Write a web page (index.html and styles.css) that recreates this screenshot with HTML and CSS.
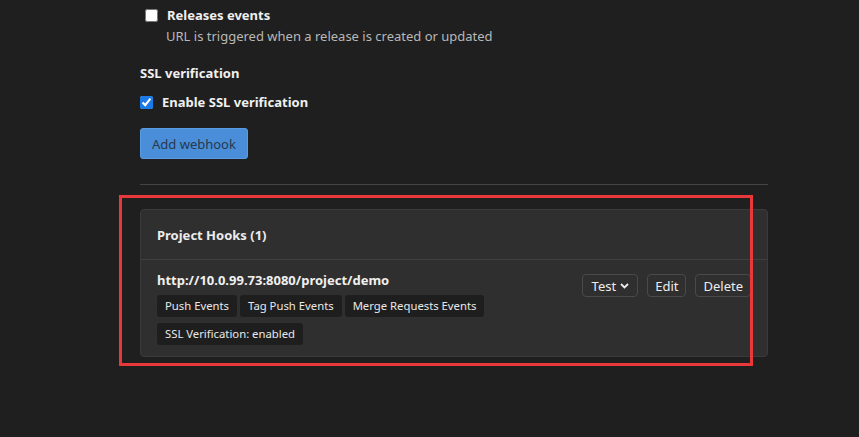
FILE: index.html
```html
<!DOCTYPE html>
<html>
<head>
<meta charset="utf-8">
<link rel="stylesheet" href="styles.css">
</head>
<body>
<div class="page">
  <div class="form">
    <label class="check sub">
      <input type="checkbox">
      <span class="check-label">Releases events</span>
    </label>
    <p class="help">URL is triggered when a release is created or updated</p>

    <div class="section-title">SSL verification</div>
    <label class="check">
      <input type="checkbox" checked>
      <span class="check-label">Enable SSL verification</span>
    </label>

    <button class="btn-primary">Add webhook</button>
  </div>

  <hr class="divider">

  <div class="panel">
    <div class="panel-head">Project Hooks (1)</div>
    <div class="panel-body">
      <div class="hook-info">
        <div class="hook-url">http://10.0.99.73:8080/project/demo</div>
        <div class="badges">
          <span class="badge">Push Events</span>
          <span class="badge">Tag Push Events</span>
          <span class="badge">Merge Requests Events</span>
        </div>
        <div class="badges">
          <span class="badge">SSL Verification: enabled</span>
        </div>
      </div>
      <div class="actions">
        <button class="btn btn-test">Test <svg class="caret" width="9" height="6" viewBox="0 0 9 6"><path d="M1 1l3.5 3.5L8 1" fill="none" stroke="currentColor" stroke-width="1.8"/></svg></button>
        <button class="btn">Edit</button>
        <button class="btn btn-delete">Delete</button>
      </div>
    </div>
  </div>

  <div class="highlight"></div>
</div>
</body>
</html>
```
FILE: styles.css
```css
html, body {
  margin: 0;
  padding: 0;
  background: #1f1f1f;
}
body {
  font-family: "Noto Sans", "Open Sans", sans-serif;
  font-size: 13px;
  color: #e6e6e6;
  width: 859px;
  height: 437px;
  overflow: hidden;
}
.page {
  position: relative;
  padding: 5px 0 0 140px;
  width: 628px;
}
.form {
  display: flex;
  flex-direction: column;
  align-items: flex-start;
}
.check {
  display: flex;
  align-items: center;
  height: 20px;
  line-height: 20px;
}
.check input {
  margin: 0;
  width: 13px;
  height: 13px;
  accent-color: #1c7ae8;
}
.check-label {
  font-weight: 700;
  color: #f0f0f0;
  margin-left: 9px;
}
.check.sub {
  padding-left: 5px;
}
.help {
  margin: 1px 0 0 26px;
  line-height: 20px;
  color: #b8b8b8;
}
.section-title {
  margin-top: 17px;
  line-height: 20px;
  font-weight: 700;
  color: #f0f0f0;
}
.section-title + .check {
  margin-top: 9px;
}
.btn-primary {
  margin-top: 16px;
  height: 31px;
  padding: 0 11px;
  font: inherit;
  color: #27384c;
  background: #4a8ed9;
  border: 1px solid #5b9be2;
  border-radius: 3px;
}
.divider {
  margin: 25px 0 0 0;
  border: 0;
  border-top: 1px solid #444;
  height: 0;
}
.panel {
  margin-top: 24px;
  background: #2f2f2f;
  border: 1px solid #3a3a3a;
  border-radius: 4px;
}
.panel-head {
  height: 50px;
  padding: 0 16px;
  display: flex;
  align-items: center;
  box-sizing: border-box;
  border-bottom: 1px solid #3f3f3f;
  font-weight: 700;
  color: #ececec;
}
.panel-body {
  display: flex;
  justify-content: space-between;
  padding: 10px 16px 11px 16px;
}
.hook-url {
  line-height: 20px;
  font-weight: 700;
  color: #f0f0f0;
}
.badges {
  display: flex;
  gap: 3px;
  margin-top: 6px;
}
.hook-url + .badges {
  margin-top: 5px;
}
.badge {
  height: 22px;
  line-height: 22px;
  padding: 0 8px;
  font-size: 11.3px;
  background: #1e1e1e;
  color: #e8e8e8;
  border-radius: 3px;
}
.actions {
  display: flex;
  gap: 9px;
  margin-top: 4px;
  align-items: flex-start;
}
.btn {
  height: 23px;
  padding: 0 7px;
  font: inherit;
  color: #ececec;
  background: transparent;
  border: 1px solid #4a4a4a;
  border-radius: 4px;
  display: flex;
  align-items: center;
  gap: 4px;
}
.btn-test {
  padding: 0 8px 0 9px;
}
.btn-delete {
  padding: 0 7px;
}
.caret {
  margin-top: 1px;
}
.highlight {
  position: absolute;
  left: 119px;
  top: 195px;
  width: 628px;
  height: 165px;
  border: 3px solid #e8383a;
}
```
